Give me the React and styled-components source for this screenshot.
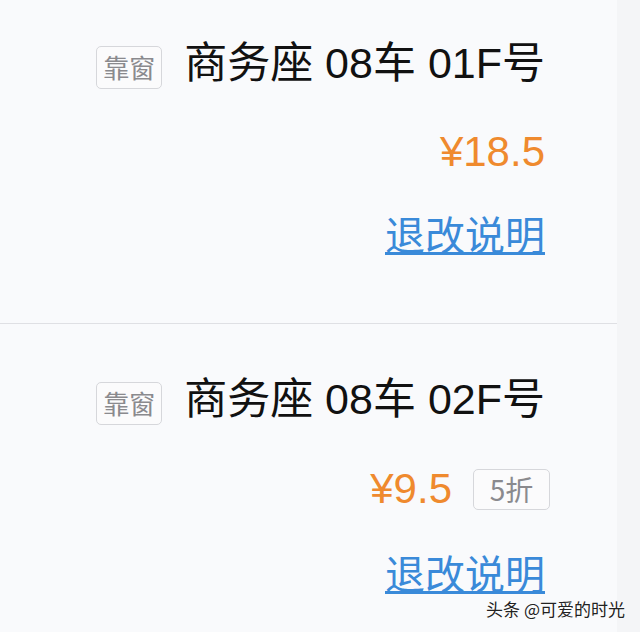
import React from "react";
import styled, { createGlobalStyle } from "styled-components";

const Global = createGlobalStyle`
  html, body { margin: 0; padding: 0; }
  body {
    background: #f9fafc;
    font-family: "Noto Sans CJK SC", "Noto Sans", sans-serif;
  }
`;

const Page = styled.div`
  position: relative;
  display: flex;
  width: 640px;
  height: 632px;
  overflow: hidden;
  background: #f9fafc;
`;

const Main = styled.div`
  width: 617px;
  display: flex;
  flex-direction: column;
`;

const Strip = styled.div`
  flex: 1;
  background: #f4f5f7;
`;

const Card = styled.section`
  display: flex;
  flex-direction: column;
  align-items: flex-end;
  padding: ${(p) => p.$top}px 72px ${(p) => p.$bottom}px 0;
`;

const Divider = styled.div`
  height: 1px;
  background: #dfe0e4;
`;

const Row = styled.div`
  display: flex;
  align-items: center;
  gap: ${(p) => p.$gap || 0}px;
  height: 50px;
  margin-top: ${(p) => p.$mt || 0}px;
`;

const Tag = styled.span`
  box-sizing: border-box;
  display: inline-flex;
  align-items: center;
  justify-content: center;
  width: ${(p) => p.$w}px;
  height: ${(p) => p.$h}px;
  margin-right: ${(p) => p.$mr || 0}px;
  border: 1.5px solid #d6d7db;
  border-radius: 5px;
  background: #fbfbfc;
  color: #8a8a8e;
  font-size: ${(p) => p.$fs}px;
  line-height: 1;
`;

const Title = styled.span`
  font-family: "Liberation Sans", "Noto Sans CJK SC", sans-serif;
  font-size: 43px;
  line-height: 50px;
  margin-bottom: 8px;
  color: #111;
  white-space: pre;
`;

const Price = styled.span`
  font-size: 42px;
  line-height: 50px;
  color: #ef8a2e;
  font-family: "Liberation Sans", "Noto Sans CJK SC", sans-serif;
`;

const Link = styled.a`
  font-size: 40px;
  line-height: 50px;
  color: #3a8ad9;
  text-decoration: underline;
  text-decoration-thickness: 3px;
  text-underline-offset: 2px;
`;

const Watermark = styled.div`
  position: absolute;
  right: 15px;
  bottom: 11px;
  font-size: 17px;
  color: #222;
  text-shadow: 0 0 2px #fff, 0 0 2px #fff;
`;

function Ticket({ top, bottom, gaps, seat, price, discount }) {
  return (
    <Card $top={top} $bottom={bottom}>
      <Row $gap={22}>
        <Tag $w={66} $h={43} $fs={26}>靠窗</Tag>
        <Title>{`商务座 08车 ${seat}号`}</Title>
      </Row>
      <Row $gap={21} $mt={gaps[0]}>
        <Price>{price}</Price>
        {discount && (
          <Tag $w={77} $h={41} $fs={28} $mr={-5}>{discount}</Tag>
        )}
      </Row>
      <Row $mt={gaps[1]}>
        <Link>退改说明</Link>
      </Row>
    </Card>
  );
}

export default function App() {
  return (
    <>
      <Global />
      <Page>
        <Main>
          <Ticket top={42} bottom={65} gaps={[35, 31]} seat="01F" price="¥18.5" />
          <Divider />
          <Ticket top={54} bottom={20} gaps={[36, 33]} seat="02F" price="¥9.5" discount="5折" />
        </Main>
        <Strip />
        <Watermark>头条 @可爱的时光</Watermark>
      </Page>
    </>
  );
}
